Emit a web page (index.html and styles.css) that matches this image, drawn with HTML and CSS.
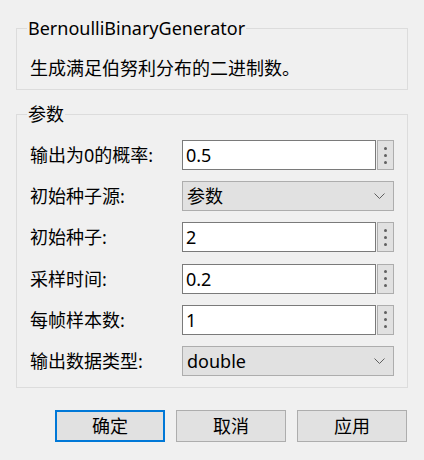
FILE: index.html
```html
<!DOCTYPE html>
<html lang="zh-CN">
<head>
<meta charset="utf-8">
<link rel="stylesheet" href="styles.css">
</head>
<body>
<div class="dialog">
  <fieldset class="group group-desc">
    <legend class="group-title">BernoulliBinaryGenerator</legend>
    <div class="desc">生成满足伯努利分布的二进制数。</div>
  </fieldset>
  <fieldset class="group group-params">
    <legend class="group-title">参数</legend>
    <div class="rows">
      <div class="row">
        <span class="label">输出为0的概率:</span>
        <span class="edit">0.5</span>
        <span class="spin"><i></i><i></i><i></i></span>
      </div>
      <div class="row">
        <span class="label">初始种子源:</span>
        <span class="combo"><span class="combo-text">参数</span><svg class="chev" width="11" height="6" viewBox="0 0 11 6"><polyline points="0.5,0.5 5.5,5.5 10.5,0.5" fill="none" stroke="#5f5f5f" stroke-width="1"/></svg></span>
      </div>
      <div class="row">
        <span class="label">初始种子:</span>
        <span class="edit">2</span>
        <span class="spin"><i></i><i></i><i></i></span>
      </div>
      <div class="row">
        <span class="label">采样时间:</span>
        <span class="edit">0.2</span>
        <span class="spin"><i></i><i></i><i></i></span>
      </div>
      <div class="row">
        <span class="label">每帧样本数:</span>
        <span class="edit">1</span>
        <span class="spin"><i></i><i></i><i></i></span>
      </div>
      <div class="row">
        <span class="label">输出数据类型:</span>
        <span class="combo"><span class="combo-text">double</span><svg class="chev" width="11" height="6" viewBox="0 0 11 6"><polyline points="0.5,0.5 5.5,5.5 10.5,0.5" fill="none" stroke="#5f5f5f" stroke-width="1"/></svg></span>
      </div>
    </div>
  </fieldset>
  <div class="buttons">
    <button class="btn btn-default">确定</button>
    <button class="btn">取消</button>
    <button class="btn">应用</button>
  </div>
</div>
</body>
</html>
```
FILE: styles.css
```css
html, body {
  margin: 0;
  padding: 0;
  background: #f0f0f0;
}
body {
  font-family: "Segoe UI", "Noto Sans", "Noto Sans CJK SC", sans-serif;
  font-size: 18px;
  line-height: 24px;
  color: #000;
}
.dialog {
  padding: 16px 16px 0 16px;
  width: 392px;
}
.group {
  margin: 0;
  padding: 0;
  border: 1px solid #dcdcdc;
  min-width: 0;
}
.group-title {
  margin-left: 10px;
  padding: 0 1px;
  line-height: 24px;
}
.group-params {
  margin-top: 12px;
}
.desc {
  padding: 16px 13px 9px 13px;
}
.rows {
  display: flex;
  flex-direction: column;
  gap: 11.2px;
  padding: 14px 0 11px 13px;
}
.row {
  display: flex;
  align-items: center;
  height: 30px;
}
.label {
  width: 152px;
  flex: none;
}
.edit {
  box-sizing: border-box;
  width: 194px;
  height: 30px;
  border: 1px solid #7a7a7a;
  background: #fff;
  padding: 0 3px;
  line-height: 28px;
}
.spin {
  box-sizing: border-box;
  width: 17px;
  height: 30px;
  margin-left: 1px;
  border: 1px solid #adadad;
  background: #e1e1e1;
  display: flex;
  flex-direction: column;
  align-items: center;
  justify-content: center;
  gap: 4px;
}
.spin i {
  display: block;
  width: 3px;
  height: 3px;
  border-radius: 50%;
  background: #606060;
}
.combo {
  box-sizing: border-box;
  width: 212px;
  height: 30px;
  border: 1px solid #adadad;
  background: #e1e1e1;
  display: flex;
  align-items: center;
  justify-content: space-between;
  padding: 0 8px 0 4px;
}
.combo-text {
  line-height: 28px;
}
.chev {
  display: block;
}
.buttons {
  display: flex;
  justify-content: flex-end;
  gap: 11px;
  margin-top: 22px;
  padding-right: 1px;
}
.btn {
  box-sizing: border-box;
  width: 110px;
  height: 32px;
  margin: 0;
  padding: 0;
  border: 1px solid #adadad;
  background: #e1e1e1;
  font: inherit;
  color: #000;
  line-height: 28px;
}
.btn-default {
  border: 2px solid #0078d7;
}
```
